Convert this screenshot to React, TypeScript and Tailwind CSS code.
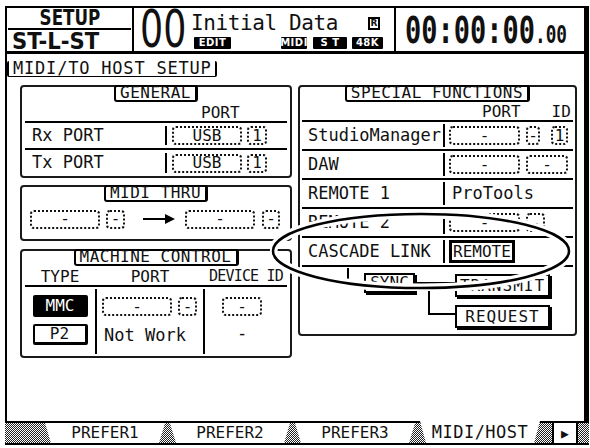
import type { ReactNode } from "react";

const lcd = "font-['DejaVu_Sans_Mono','Liberation_Mono',monospace]";

// dotted parameter field, as drawn on the console LCD
function Field({ w, children }: { w: string; children?: ReactNode }) {
  return (
    <span
      className={`flex h-[19px] ${w} items-center justify-center rounded-[4px] border-2 border-dotted border-[#111] text-[16px] leading-none`}
    >
      {children}
    </span>
  );
}

function PanelTitle({ children }: { children: ReactNode }) {
  return (
    <div className="-mt-[2px] flex justify-center">
      <span className="flex h-[17px] items-center rounded-[3px] border-2 border-r-[3px] border-black px-[4px] pb-[1px] text-[16px] leading-none tracking-[0.5px]">
        {children}
      </span>
    </div>
  );
}

function Panel({ title, className, children }: { title: string; className: string; children: ReactNode }) {
  return (
    <div className={`flex flex-col rounded-[4px] border-2 border-[#1a1a1a] px-[3px] ${className}`}>
      <PanelTitle>{title}</PanelTitle>
      {children}
    </div>
  );
}

function Badge({ w, children }: { w: string; children: ReactNode }) {
  return (
    <span
      className={`flex h-[12px] ${w} items-center justify-center rounded-[1px] bg-black font-['DejaVu_Sans',sans-serif] text-[10px] font-bold leading-none tracking-[0.5px] text-white`}
    >
      {children}
    </span>
  );
}

function Header() {
  return (
    <header className="flex h-[48px] border-t-2 border-r-[5px] border-b-[3px] border-l-2 border-black">
      <div className="flex w-[125px] shrink-0 flex-col">
        <div className="mx-[1px] flex h-[23px] items-end justify-center border-b-2 border-black">
          <span className="inline-block scale-x-[0.76] font-['DejaVu_Sans',sans-serif] text-[22px] leading-[20px] font-bold">
            SETUP
          </span>
        </div>
        <div className="flex flex-1 items-center pl-[5px]">
          <span className="inline-block origin-left scale-x-[0.92] font-['DejaVu_Sans',sans-serif] text-[23px] leading-none font-semibold whitespace-nowrap">
            ST-L-ST
          </span>
        </div>
      </div>

      <div className="flex w-[262px] shrink-0 border-l-2 border-black">
        <div className="ml-[6px] w-[51px] shrink-0 overflow-visible">
          <span className="inline-block origin-left scale-x-[0.7] font-['DejaVu_Sans',sans-serif] text-[52px] leading-[42px]">
            00
          </span>
        </div>
        <div className="flex flex-1 flex-col pt-[3px]">
          <div className="flex h-[24px] items-center">
            <span className={`${lcd} text-[21px] leading-none tracking-[-0.4px] whitespace-nowrap`}>Initial Data</span>
            <span className="ml-[30px] flex h-[13px] w-[12px] shrink-0 items-center justify-center border-2 border-black font-['DejaVu_Sans',sans-serif] text-[9px] leading-none font-bold">
              R
            </span>
          </div>
          <div className="mt-[2px] flex items-center">
            <span className="ml-[3px]">
              <Badge w="w-[37px]">EDIT</Badge>
            </span>
            <span className="ml-[50px]">
              <Badge w="w-[26px]">MIDI</Badge>
            </span>
            <span className="ml-[6px]">
              <Badge w="w-[34px]">S T</Badge>
            </span>
            <span className="ml-[5px]">
              <Badge w="w-[31px]">48K</Badge>
            </span>
          </div>
        </div>
      </div>

      <div className="flex min-w-0 flex-1 items-center overflow-visible border-l-2 border-black pl-[9px]">
        <span className="inline-flex origin-left scale-x-[0.71] items-end font-['DejaVu_Sans_Mono',monospace] font-bold whitespace-nowrap">
          <span className="text-[38px] leading-[30px]">00:00:00</span>
          <span className="text-[25px] leading-[21px]">.00</span>
        </span>
      </div>
    </header>
  );
}

function General() {
  const rows = ["Rx PORT", "Tx PORT"];
  return (
    <Panel title="GENERAL" className="h-[93px]">
      <div className="flex h-[19px] items-end">
        <span className="w-[140px]" />
        <span className="pl-[36px] text-[16px] leading-none">PORT</span>
      </div>
      {rows.map((label) => (
        <div key={label} className="flex h-[28px] border-t-2 border-black">
          <span className="flex w-[140px] items-center pl-[7px] text-[17px]">{label}</span>
          <div className="my-[3px] flex items-center border-l-2 border-black pl-[5px]">
            <Field w="w-[70px]">USB</Field>
            <span className="ml-[5px]">
              <Field w="w-[20px]">1</Field>
            </span>
          </div>
        </div>
      ))}
    </Panel>
  );
}

function MidiThru() {
  return (
    <Panel title="MIDI THRU" className="mt-[7px] h-[56px]">
      <div className="flex flex-1 items-center pb-[3px] pl-[5px]">
        <Field w="w-[70px]">-</Field>
        <span className="ml-[6px]">
          <Field w="w-[19px]">-</Field>
        </span>
        <svg className="ml-[18px]" width="32" height="12" viewBox="0 0 32 12">
          <line x1="0" y1="6" x2="24" y2="6" stroke="#000" strokeWidth="2" />
          <path d="M22 1 L32 6 L22 11 Z" fill="#000" />
        </svg>
        <span className="ml-[10px]">
          <Field w="w-[70px]">-</Field>
        </span>
        <span className="ml-[7px]">
          <Field w="w-[18px]">-</Field>
        </span>
      </div>
    </Panel>
  );
}

function MachineControl() {
  return (
    <Panel title="MACHINE CONTROL" className="mt-[8px] h-[109px]">
      <div className="flex h-[21px] items-center border-b-2 border-black pt-[2px] text-[16px] leading-none whitespace-nowrap">
        <span className="w-[70px] text-center">TYPE</span>
        <span className="w-[110px] text-center">PORT</span>
        <span className="flex-1 text-center text-[15px] tracking-[-0.8px]">DEVICE ID</span>
      </div>
      <div className="flex flex-1">
        <div className="flex w-[70px] flex-col items-center">
          <span className="mt-[8px] flex h-[22px] w-[55px] items-center justify-center rounded-[2px] bg-black text-[16px] text-white">
            MMC
          </span>
          <span className="mt-[7px] flex h-[21px] w-[55px] items-center justify-center rounded-[2px] border-2 border-r-[3px] border-b-[3px] border-black text-[16px]">
            P2
          </span>
        </div>
        <div className="my-[2px] flex w-[110px] flex-col border-x-2 border-black pl-[5px]">
          <div className="mt-[8px] flex">
            <Field w="w-[70px]">-</Field>
            <span className="ml-[6px]">
              <Field w="w-[19px]">-</Field>
            </span>
          </div>
          <span className="mt-[11px] pl-[2px] text-[17px] leading-none">Not Work</span>
        </div>
        <div className="flex flex-1 flex-col items-center pr-[8px]">
          <span className="mt-[10px]">
            <Field w="w-[40px]">-</Field>
          </span>
          <span className="mt-[9px] text-[17px] leading-none">-</span>
        </div>
      </div>
    </Panel>
  );
}

function SpecialRow({ label, children }: { label: string; children: ReactNode }) {
  return (
    <div className="flex h-[29px] border-b-2 border-black">
      <span className="flex w-[141px] items-center pl-[6px] text-[17px]">{label}</span>
      <div className="my-[2px] flex flex-1 items-center border-l-2 border-black pl-[4px]">{children}</div>
    </div>
  );
}

function Special() {
  return (
    <div className="flex h-[251px] w-[279px] flex-col rounded-[4px] border-2 border-[#1a1a1a] px-[2px]">
      <PanelTitle>SPECIAL FUNCTIONS</PanelTitle>
      <div className="flex h-[20px] items-end border-b-2 border-black text-[16px] leading-none">
        <span className="ml-[180px]">PORT</span>
        <span className="ml-[31px]">ID</span>
      </div>
      <SpecialRow label="StudioManager">
        <Field w="w-[71px]">-</Field>
        <span className="ml-[6px]">
          <Field w="w-[14px]">-</Field>
        </span>
        <span className="ml-[11px]">
          <Field w="w-[17px]">1</Field>
        </span>
      </SpecialRow>
      <SpecialRow label="DAW">
        <Field w="w-[71px]">-</Field>
        <span className="ml-[6px]">
          <Field w="w-[42px]">-</Field>
        </span>
      </SpecialRow>
      <SpecialRow label="REMOTE 1">
        <span className="pl-[3px] text-[17px]">ProTools</span>
      </SpecialRow>
      <SpecialRow label="REMOTE 2">
        <Field w="w-[71px]">-</Field>
        <span className="ml-[6px]">
          <Field w="w-[19px]">-</Field>
        </span>
      </SpecialRow>
      <SpecialRow label="CASCADE LINK">
        <span className="flex h-[23px] items-center border-[3px] border-black px-[1px] text-[16px] leading-none">
          REMOTE
        </span>
      </SpecialRow>

      {/* cascade link diagram */}
      <div className="relative flex-1 text-[16px] leading-none">
        <span className="absolute top-[1px] left-[45px] h-[11px] w-[2px] bg-black" />
        <span className="absolute top-[6px] left-[62px] flex h-[20px] w-[51px] items-center justify-center border-2 border-black bg-white shadow-[2px_2px_0_#000]">
          SYNC
        </span>
        <span className="absolute top-[15px] left-[115px] h-[2px] w-[38px] bg-black" />
        <span className="absolute top-[16px] left-[126px] h-[32px] w-[27px] border-b-2 border-l-2 border-black" />
        <span className="absolute top-[7px] left-[153px] flex h-[23px] w-[95px] items-center justify-center border-2 border-black bg-white tracking-[1px] shadow-[2px_2px_0_#000]">
          TRANSMIT
        </span>
        <span className="absolute top-[38px] left-[153px] flex h-[23px] w-[95px] items-center justify-center border-2 border-black bg-white tracking-[1px] shadow-[2px_2px_0_#000]">
          REQUEST
        </span>
      </div>
    </div>
  );
}

function Tab({ label, active }: { label: string; active?: boolean }) {
  return (
    <div
      className={`flex w-[120px] items-center justify-center bg-white [clip-path:polygon(0_0,100%_0,95%_100%,5%_100%)] ${
        active ? "z-10 -mt-[2px] text-[17px] tracking-[0.5px]" : "text-[16px]"
      }`}
    >
      {label}
    </div>
  );
}

function TabBar() {
  return (
    <div className="flex h-[24px] gap-[5px] border-t-2 border-b-2 border-black bg-[repeating-conic-gradient(#222_0%_25%,#fff_0%_50%)] bg-[length:2px_2px] pl-[40px] leading-none">
      <Tab label="PREFER1" />
      <Tab label="PREFER2" />
      <Tab label="PREFER3" />
      <Tab label="MIDI/HOST" active />
      <div className="ml-[7px] flex w-[26px] items-center justify-center border-x-2 border-black bg-white text-[13px]">
        ▶
      </div>
    </div>
  );
}

export default function App() {
  return (
    <div className={`relative h-[448px] w-[590px] overflow-hidden bg-white pt-[6px] pl-[5px] text-[#111] ${lcd}`}>
      <div className="flex h-[439px] w-[584px] flex-col">
        <Header />
        <main className="flex flex-1 flex-col border-r-[5px] border-l-2 border-black pt-[7px]">
          <div className="flex">
            <span className="flex h-[16px] items-center rounded-[2px] border-x-2 border-b border-black pr-[3px] pl-[4px] text-[17px] leading-none tracking-[0.8px]">
              MIDI/TO HOST SETUP
            </span>
          </div>
          <div className="mt-[8px] flex gap-[6px] pl-[13px]">
            <div className="flex w-[272px] flex-col">
              <General />
              <MidiThru />
              <MachineControl />
            </div>
            <Special />
          </div>
        </main>
        <TabBar />
      </div>

      {/* highlight ring around the cascade link setting */}
      <svg className="absolute top-[211px] left-[270px]" width="304" height="80" viewBox="0 0 304 80">
        <ellipse cx="151" cy="40" rx="148" ry="37" fill="none" stroke="#fff" strokeWidth="9" />
        <ellipse cx="151" cy="40" rx="148" ry="37" fill="none" stroke="#000" strokeWidth="2.5" />
      </svg>
    </div>
  );
}
